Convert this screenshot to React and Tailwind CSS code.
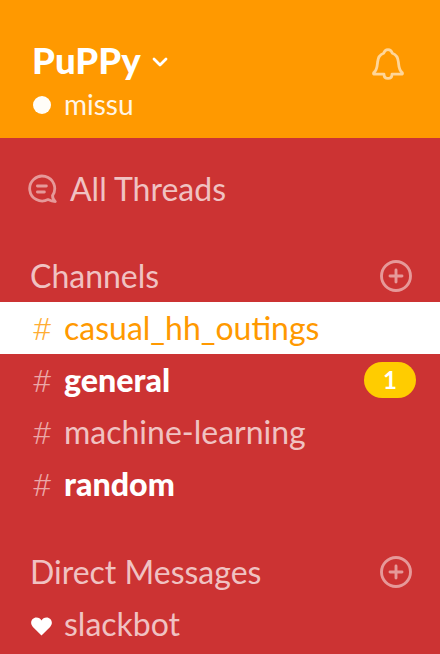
function PlusCircle() {
  return (
    <svg width="32" height="32" viewBox="0 0 32 32" fill="none" stroke="#e69999" strokeWidth="2.9" strokeLinecap="round">
      <circle cx="16" cy="16" r="14.5" />
      <path d="M16 10v12M10 16h12" />
    </svg>
  );
}

function Section({ title }) {
  return (
    <div className="flex h-[52px] items-center justify-between pl-[30px] pr-7 text-[#f0c2c2]">
      <span>{title}</span>
      <PlusCircle />
    </div>
  );
}

function Channel({ name, active, unread, badge }) {
  const row = active ? "bg-white text-[#ff9900]" : unread ? "font-black text-white" : "text-[#f0c2c2]";
  return (
    <div className={"flex h-[52px] items-center pl-8 pr-6 " + row}>
      <span className={"w-8 origin-left scale-x-110 font-light " + (active ? "text-[#ffad33]" : "text-[#eba8a8]")}>#</span>
      <span className={unread ? "text-[32.2px]" : ""}>{name}</span>
      {badge && (
        <span className="ml-auto flex h-9 w-[52px] items-center justify-center rounded-full bg-[#ffcc00] text-[24px] font-bold text-white">
          {badge}
        </span>
      )}
    </div>
  );
}

export default function App() {
  return (
    <div className="h-[654px] w-[440px] overflow-hidden bg-[#cc3333] font-['Lato',sans-serif] text-[32px] leading-[52px]">
      <header className="flex h-[138px] justify-between bg-[#ff9900] pl-8 pr-9 text-white">
        <div className="pt-9">
          <div className="flex h-12 items-center gap-[11px]">
            <span className="text-[36.6px] font-black">PuPPy</span>
            <svg className="mt-[3px]" width="16" height="12" viewBox="0 0 16 12" fill="none" stroke="white" strokeWidth="2.8" strokeLinecap="round" strokeLinejoin="round">
              <path d="M2 3l6 6 6-6" />
            </svg>
          </div>
          <div className="flex h-10 items-center text-[28px]">
            <span className="ml-px mr-[13px] mt-0.5 size-[18px] rounded-full bg-[#fffdf8]" />
            <span className="text-[#fff5e6]">missu</span>
          </div>
        </div>
        <svg className="mt-12" width="32" height="33" viewBox="0 0 32 33" fill="none" stroke="#ffd699" strokeWidth="2.8" strokeLinecap="round" strokeLinejoin="round">
          <path d="M12 26.2H2.4c-1.3 0-1-1.4-.2-2C5 22 5.200 18 5.600 14c.4-4.500 2.500-7.500 6-8.700.7-2.400 2-3.700 4.400-3.700s3.700 1.300 4.400 3.700c3.500 1.200 5.600 4.200 6 8.700.4 4 .6 8 3.400 10.200.8.600 1.100 2-.2 2H20M12 26.200c0 2.600 1.500 4.200 4 4.200s4-1.600 4-4.200" />
        </svg>
      </header>

      <div className="mt-[25px] flex h-[52px] items-center gap-[13px] pl-7 text-[#f0c2c2]">
        <svg width="29" height="30" viewBox="0 0 29 30" fill="none" stroke="#e69999" strokeWidth="2.8" strokeLinecap="round" strokeLinejoin="round">
          <path d="M24.500 21.600A12.500 12.500 0 1 0 20 25.600c2.400 1.200 4.500 2 7.300 2-2-1.500-2.700-3.500-2.800-6ZM9.400 12h9M9.400 18h7" />
        </svg>
        <span>All Threads</span>
      </div>

      <div className="mt-[35px]">
        <Section title="Channels" />
        <Channel name="casual_hh_outings" active />
        <Channel name="general" unread badge="1" />
        <Channel name="machine-learning" />
        <Channel name="random" unread />
      </div>

      <div className="mt-9">
        <Section title="Direct Messages" />
        <div className="flex h-[52px] items-center pl-[31px] text-[#f0c2c2]">
          <svg className="mr-3 mt-1" width="21" height="19" viewBox="0 0 21 19" fill="white">
            <path d="M10.500 18.500 1.900 9.900C-2 5.600 1.200.5 5.400.5c2.300 0 4.100 1.100 5.100 3.100 1-2 2.800-3.100 5.100-3.100 4.200 0 7.400 5.100 3.500 9.400Z" />
          </svg>
          <span>slackbot</span>
        </div>
      </div>
    </div>
  );
}
